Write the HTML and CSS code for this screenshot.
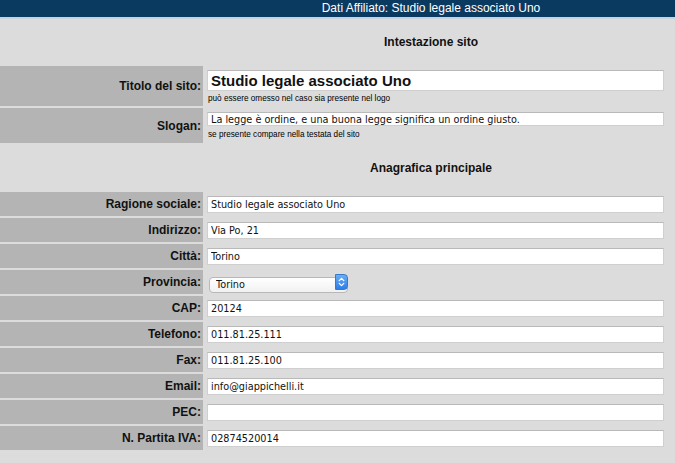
FILE: index.html
```html
<!DOCTYPE html>
<html lang="it">
<head>
    <meta charset="UTF-8">
    <meta name="viewport" content="width=device-width, initial-scale=1.0">
    <title>Dati Affiliato</title>
    <link rel="stylesheet" href="styles.css">
</head>
<body>

    <div class="topbar">Dati Affiliato: Studio legale associato Uno</div>

    <form class="affiliate-form">
        <div class="section-title">Intestazione sito</div>

        <label class="field-label" for="titolo">Titolo del sito:</label>
        <div class="field-value field-tall">
            <input type="text" id="titolo" class="input-title" value="Studio legale associato Uno">
            <div class="hint">può essere omesso nel caso sia presente nel logo</div>
        </div>

        <label class="field-label" for="slogan">Slogan:</label>
        <div class="field-value field-tall slogan">
            <input type="text" id="slogan" value="La legge è ordine, e una buona legge significa un ordine giusto.">
            <div class="hint">se presente compare nella testata del sito</div>
        </div>

        <div class="section-title">Anagrafica principale</div>

        <label class="field-label" for="ragione">Ragione sociale:</label>
        <div class="field-value"><input type="text" id="ragione" value="Studio legale associato Uno"></div>

        <label class="field-label" for="indirizzo">Indirizzo:</label>
        <div class="field-value"><input type="text" id="indirizzo" value="Via Po, 21"></div>

        <label class="field-label" for="citta">Città:</label>
        <div class="field-value"><input type="text" id="citta" value="Torino"></div>

        <label class="field-label" for="provincia">Provincia:</label>
        <div class="field-value">
            <div class="select-wrap">
                <select id="provincia">
                    <option selected>Torino</option>
                    <option>Milano</option>
                    <option>Roma</option>
                </select>
                <span class="select-stepper">
                    <svg width="12" height="14" viewBox="0 0 12 14">
                        <polyline points="3.5,5.5 6,3 8.5,5.5" fill="none" stroke="#fff" stroke-width="1.4" stroke-linecap="round" stroke-linejoin="round"/>
                        <polyline points="3.5,8.5 6,11 8.5,8.5" fill="none" stroke="#fff" stroke-width="1.4" stroke-linecap="round" stroke-linejoin="round"/>
                    </svg>
                </span>
            </div>
        </div>

        <label class="field-label" for="cap">CAP:</label>
        <div class="field-value"><input type="text" id="cap" value="20124"></div>

        <label class="field-label" for="telefono">Telefono:</label>
        <div class="field-value"><input type="text" id="telefono" value="011.81.25.111"></div>

        <label class="field-label" for="fax">Fax:</label>
        <div class="field-value"><input type="text" id="fax" value="011.81.25.100"></div>

        <label class="field-label" for="email">Email:</label>
        <div class="field-value"><input type="text" id="email" value="info@giappichelli.it"></div>

        <label class="field-label" for="pec">PEC:</label>
        <div class="field-value"><input type="text" id="pec" value=""></div>

        <label class="field-label" for="piva">N. Partita IVA:</label>
        <div class="field-value"><input type="text" id="piva" value="02874520014"></div>
    </form>

</body>
</html>
```

FILE: styles.css
```css
* {
    margin: 0;
    padding: 0;
    box-sizing: border-box;
}

body {
    background: #dcdcdc;
    font-family: 'Liberation Sans', Arial, sans-serif;
    color: #111;
    overflow: hidden;
}

.topbar {
    height: 19px;
    background: #0b3a61;
    border-bottom: 2px solid #c6d3df;
    color: #fff;
    font-size: 12px;
    line-height: 17px;
    text-align: center;
    padding-left: 203px;
    padding-right: 16px;
}

.affiliate-form {
    display: grid;
    grid-template-columns: 203px 1fr;
    grid-template-rows: 45px 40px 35px 45px repeat(10, 24px);
    row-gap: 2px;
}

.section-title {
    grid-column: 1 / 3;
    display: flex;
    align-items: center;
    justify-content: center;
    padding-left: 203px;
    padding-right: 16px;
    font-size: 12px;
    font-weight: 700;
}

.field-label {
    background: #b4b4b4;
    display: flex;
    align-items: center;
    justify-content: flex-end;
    padding-right: 2px;
    font-size: 12px;
    font-weight: 700;
}

.field-value {
    display: flex;
    flex-direction: column;
    justify-content: center;
    padding: 0 11px 0 4px;
}

.field-tall {
    justify-content: flex-start;
    padding-top: 4px;
}

input {
    width: 100%;
    height: 17px;
    border: 1px solid #cfcfcf;
    border-top-color: #b9b9b9;
    background: #fff;
    padding: 0 3px;
    font-family: 'DejaVu Sans', 'Liberation Sans', sans-serif;
    font-size: 9.7px;
    color: #111;
    outline: none;
}

.input-title {
    height: 21px;
    font-family: 'Liberation Sans', Arial, sans-serif;
    font-size: 15px;
    font-weight: 700;
}

.hint {
    font-size: 8.2px;
    line-height: 15px;
    padding-left: 1px;
    color: #000;
}

.slogan .hint {
    line-height: 17px;
}

.select-wrap {
    position: relative;
    width: 139px;
    height: 16px;
    margin-left: 2px;
}

select {
    width: 100%;
    height: 100%;
    appearance: none;
    -webkit-appearance: none;
    border: 1px solid #b8b8b8;
    border-radius: 4px;
    background: linear-gradient(#ffffff, #f1f1f1);
    padding: 0 0 0 6px;
    font-family: 'DejaVu Sans', 'Liberation Sans', sans-serif;
    font-size: 9.7px;
    color: #111;
    outline: none;
}

.select-stepper {
    position: absolute;
    top: 0;
    right: 0;
    width: 13px;
    height: 16px;
    border-radius: 0 4px 4px 0;
    background: linear-gradient(#6aaef5, #2f7de6);
    border: 1px solid #3a78c8;
    display: flex;
    align-items: center;
    justify-content: center;
}
```
